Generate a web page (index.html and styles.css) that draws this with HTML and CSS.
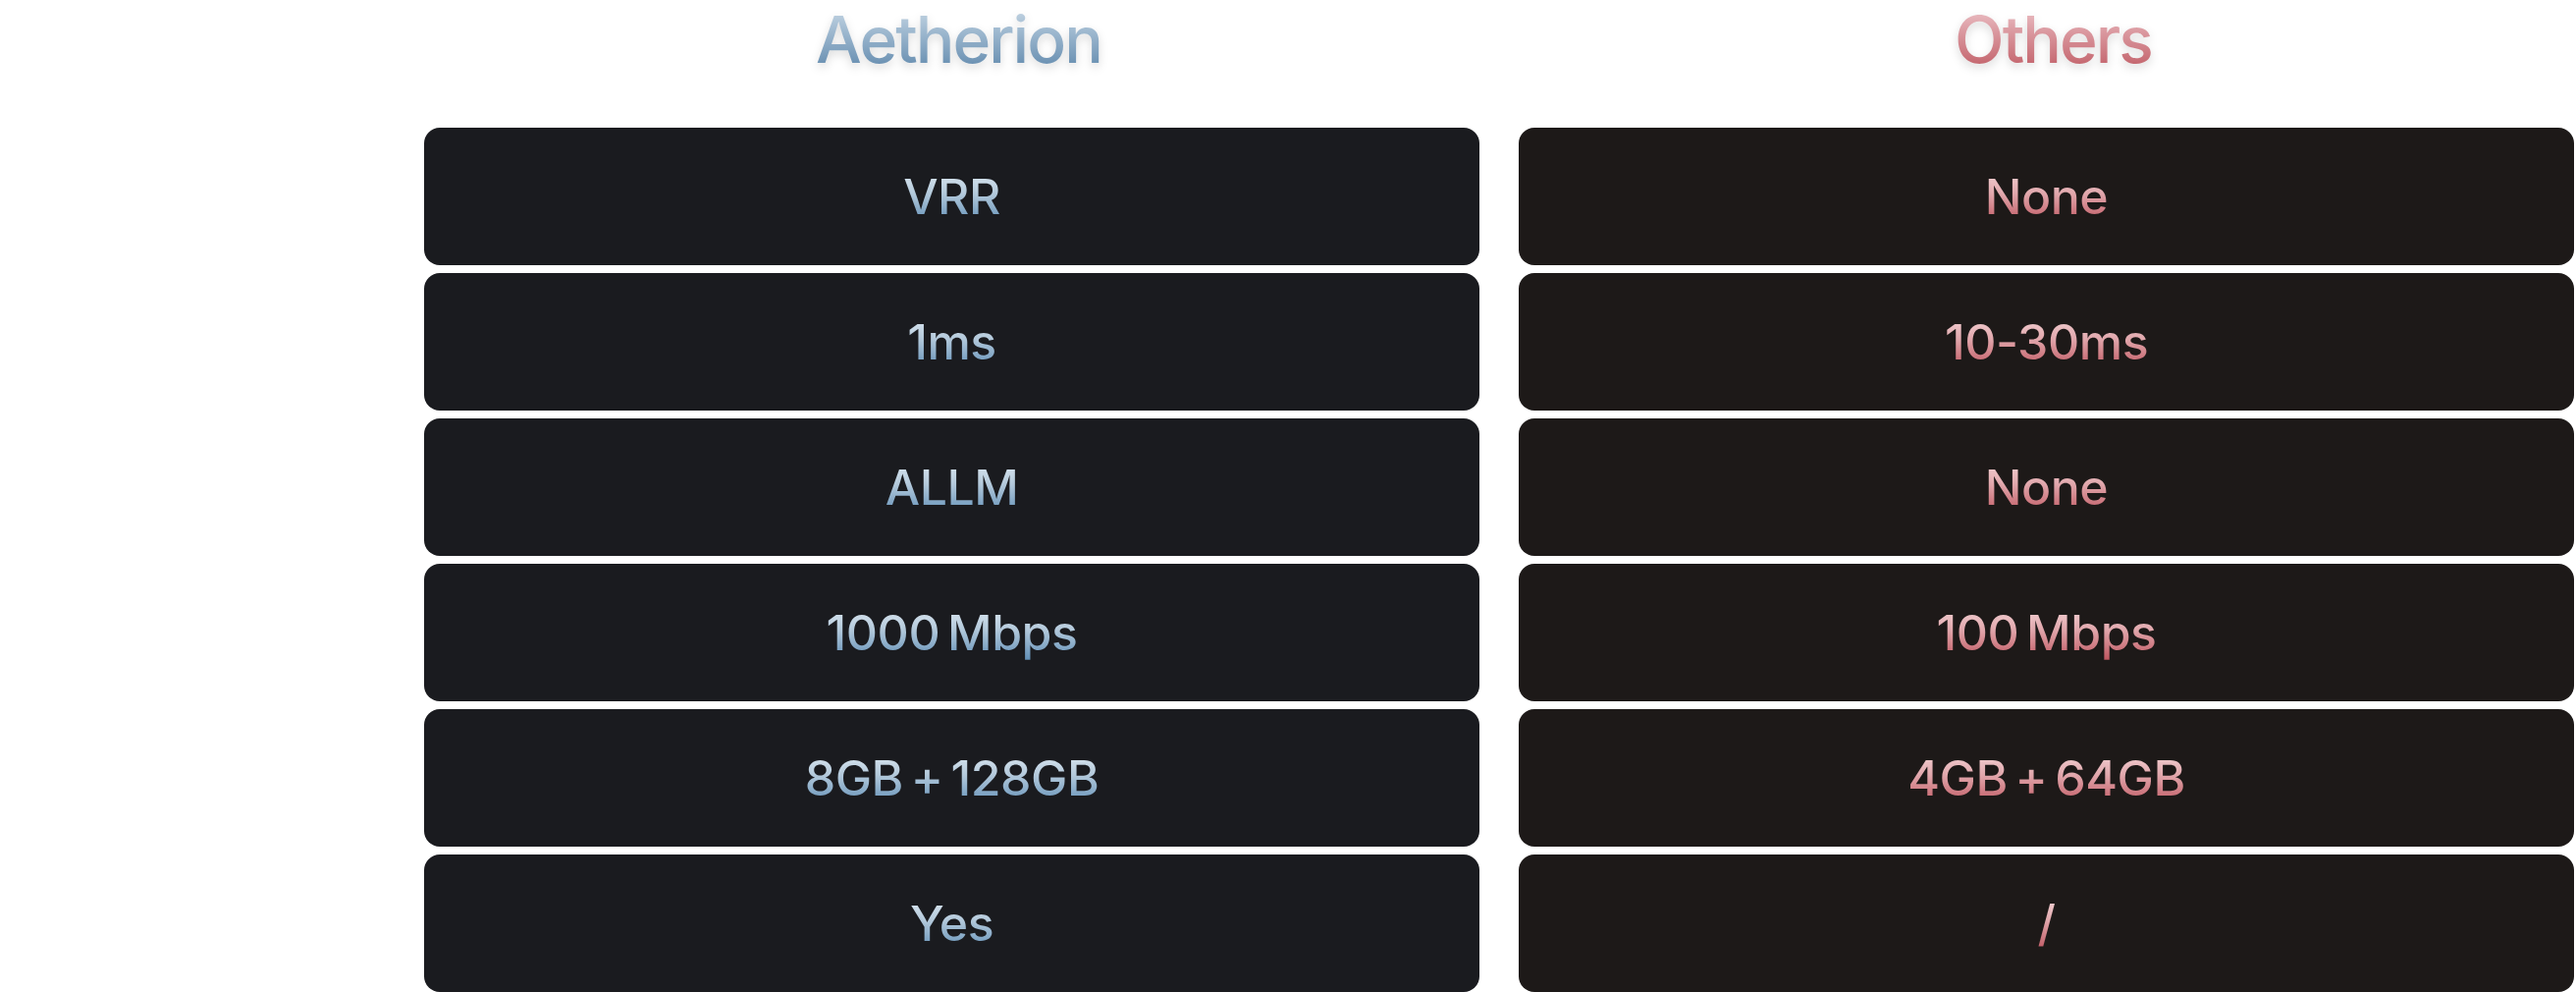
FILE: index.html
```html
<!DOCTYPE html>
<html lang="en">
<head>
<meta charset="utf-8">
<title>Aetherion vs Others</title>
<link rel="stylesheet" href="styles.css">
</head>
<body>
<main class="compare">
  <div class="label"></div>
  <div class="head head-a"><span class="grad-a">Aetherion</span></div>
  <div class="head head-o"><span class="grad-o">Others</span></div>

  <div class="label"></div>
  <div class="cell cell-a"><span class="grad-a">VRR</span></div>
  <div class="cell cell-o"><span class="grad-o">None</span></div>

  <div class="label"></div>
  <div class="cell cell-a"><span class="grad-a">1ms</span></div>
  <div class="cell cell-o"><span class="grad-o">10-30ms</span></div>

  <div class="label"></div>
  <div class="cell cell-a"><span class="grad-a">ALLM</span></div>
  <div class="cell cell-o"><span class="grad-o">None</span></div>

  <div class="label"></div>
  <div class="cell cell-a"><span class="grad-a">1000 Mbps</span></div>
  <div class="cell cell-o"><span class="grad-o">100 Mbps</span></div>

  <div class="label"></div>
  <div class="cell cell-a"><span class="grad-a">8GB + 128GB</span></div>
  <div class="cell cell-o"><span class="grad-o">4GB + 64GB</span></div>

  <div class="label"></div>
  <div class="cell cell-a"><span class="grad-a">Yes</span></div>
  <div class="cell cell-o"><span class="grad-o">/</span></div>
</main>
</body>
</html>
```

FILE: styles.css
```css
html, body {
  margin: 0;
  padding: 0;
  background: #ffffff;
}

body {
  font-family: Inter, "Noto Sans", "Liberation Sans", sans-serif;
  overflow: hidden;
}

.compare {
  display: grid;
  grid-template-columns: 392px 1fr 1fr;
  grid-template-rows: 122px repeat(6, 140px);
  column-gap: 40px;
  row-gap: 8px;
  padding-right: 2px;
}

.head {
  display: flex;
  justify-content: center;
  align-items: flex-start;
  padding-left: 14px;
  font-size: 66px;
  font-weight: 500;
  letter-spacing: -0.03em;
  line-height: 80px;
}

.head span {
  filter: drop-shadow(0 4px 5px rgba(0, 0, 0, 0.14));
}

.cell {
  display: flex;
  justify-content: center;
  align-items: center;
  border-radius: 16px;
  font-size: 50px;
  font-weight: 500;
  letter-spacing: -0.01em;
  word-spacing: -5px;
}

.cell-a {
  background: #1a1b1f;
}

.cell-o {
  background: #1d1918;
}

.grad-a {
  background: linear-gradient(180deg, #e4edf4 0%, #b3c9db 45%, #5b8bb4 100%);
  -webkit-background-clip: text;
  background-clip: text;
  color: transparent;
}

.grad-o {
  background: linear-gradient(180deg, #f6dadc 0%, #e1a7ac 45%, #bd515b 100%);
  -webkit-background-clip: text;
  background-clip: text;
  color: transparent;
}

.head .grad-a {
  background: linear-gradient(180deg, #d2dfea 0%, #98b4cc 45%, #5681a7 100%);
  -webkit-background-clip: text;
  background-clip: text;
}

.head .grad-o {
  background: linear-gradient(180deg, #f1ced3 0%, #d8939a 45%, #bc535c 100%);
  -webkit-background-clip: text;
  background-clip: text;
}
```
